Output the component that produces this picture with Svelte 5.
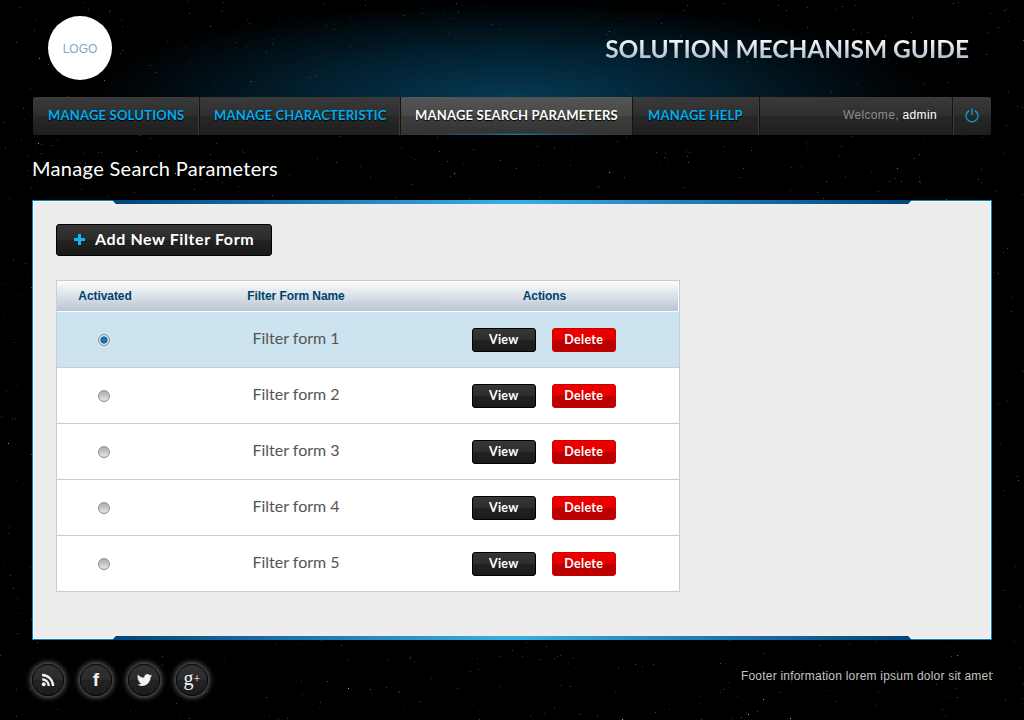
<script lang="ts">
  // seeded so the star field stays the same between runs
  let seed = 4711;
  function rnd() {
    seed = (seed * 16807) % 2147483647;
    return seed / 2147483647;
  }
  const stars = Array.from({ length: 1700 }, () => {
    const bright = rnd() > 0.94;
    return {
      x: Math.floor(rnd() * 1024),
      y: Math.floor(rnd() * 720),
      o: bright ? 0.4 + rnd() * 0.35 : 0.08 + rnd() * 0.25,
    };
  });

  const navItems = [
    { label: "MANAGE SOLUTIONS", width: 167 },
    { label: "MANAGE CHARACTERISTIC", width: 201 },
    { label: "MANAGE SEARCH PARAMETERS", width: 232, active: true },
    { label: "MANAGE HELP", width: 127 },
  ];

  const forms = [
    "Filter form 1",
    "Filter form 2",
    "Filter form 3",
    "Filter form 4",
    "Filter form 5",
  ];
  let activated = "Filter form 1";
</script>

<svg class="stars" width="1024" height="720" aria-hidden="true">
  {#each stars as star}
    <rect x={star.x} y={star.y} width="1" height="1" fill="#fff" opacity={star.o} />
  {/each}
</svg>

<div class="page">
  <header>
    <div class="logo">LOGO</div>
    <div class="title">SOLUTION MECHANISM GUIDE</div>
  </header>

  <nav>
    {#each navItems as item}
      <a href="#top" class="item" class:active={item.active} style="width: {item.width}px">{item.label}</a>
    {/each}
    <div class="welcome">Welcome, <b>admin</b></div>
    <button class="power" aria-label="Log out">
      <svg width="14" height="15" viewBox="0 0 14 15" fill="none" stroke="#0ea5e0" stroke-width="1.2">
        <path d="M4.2 2.6a6 6 0 1 0 5.6 0" />
        <path d="M7 0.5v6.6" />
      </svg>
    </button>
  </nav>

  <h1>Manage Search Parameters</h1>

  <main class="panel">
    <div class="strip top"></div>
    <button class="add"><span class="plus"></span>Add New Filter Form</button>

    <div class="table-wrap">
      <table>
        <thead>
          <tr>
            <th class="c1">Activated</th>
            <th class="c2">Filter Form Name</th>
            <th class="c3">Actions</th>
          </tr>
        </thead>
        <tbody>
          {#each forms as form}
            <tr class:selected={activated === form}>
              <td class="c1">
                <input type="radio" name="active-form" value={form} bind:group={activated} />
              </td>
              <td class="c2 name">{form}</td>
              <td class="c3">
                <div class="actions">
                  <button class="small dark">View</button>
                  <button class="small red">Delete</button>
                </div>
              </td>
            </tr>
          {/each}
        </tbody>
      </table>
    </div>
    <div class="strip bottom"></div>
  </main>

  <footer>
    <div class="social">
      <a href="#top" aria-label="RSS">
        <svg width="16" height="16" viewBox="0 0 18 18" fill="none" stroke="#f2f2f2" stroke-width="2.6">
          <circle cx="4.2" cy="13.8" r="2.2" fill="#f2f2f2" stroke="none" />
          <path d="M2.4 8.2a7.4 7.4 0 0 1 7.4 7.6" />
          <path d="M2.4 3.4a12.3 12.3 0 0 1 12.3 12.4" />
        </svg>
      </a>
      <a href="#top" class="letter f">f</a>
      <a href="#top" aria-label="Twitter">
        <svg width="15" height="12" viewBox="0 0 24 20" preserveAspectRatio="none" fill="#f2f2f2">
          <path d="M24 2.6a10 10 0 0 1-2.8.8 5 5 0 0 0 2.1-2.7c-1 .6-2 1-3.1 1.2a4.9 4.9 0 0 0-8.4 4.5C7.7 6.2 4 4.2 1.6 1.2a4.8 4.8 0 0 0 1.5 6.6 4.9 4.9 0 0 1-2.2-.6v.1a4.9 4.9 0 0 0 3.9 4.8 5 5 0 0 1-2.2.1 4.9 4.9 0 0 0 4.6 3.4A9.9 9.9 0 0 1 0 17.7 14 14 0 0 0 7.6 20c9 0 14-7.5 14-14v-.6A10 10 0 0 0 24 2.6z" />
        </svg>
      </a>
      <a href="#top" class="letter g">g<sup>+</sup></a>
    </div>
    <p>Footer information lorem ipsum dolor sit amet</p>
  </footer>
</div>

<style>
  :global(body) {
    background: #000;
    overflow: hidden;
  }
  .stars {
    position: absolute;
    top: 0;
    left: 0;
  }
  .page {
    position: relative;
    box-sizing: border-box;
    width: 1024px;
    height: 720px;
    padding: 0 32px;
    background: radial-gradient(ellipse 420px 95px at 512px 97px, rgba(5, 60, 88, 0.95), rgba(3, 44, 66, 0.72) 48%, rgba(0, 0, 0, 0) 100%) 0 0 / 1024px 97px no-repeat;
    font-family: "Lato", "Liberation Sans", sans-serif;
  }

  header {
    height: 97px;
    display: flex;
    justify-content: space-between;
    align-items: flex-start;
  }
  .logo {
    width: 64px;
    height: 64px;
    margin: 16px 0 0 16px;
    border-radius: 50%;
    background: #fff;
    color: #7fa8c0;
    font: 12px/66px "Liberation Sans", sans-serif;
    text-align: center;
  }
  .title {
    margin: 34px 23px 0 0;
    font-size: 24.5px;
    line-height: 30px;
    font-weight: 700;
    background: linear-gradient(#f4f7fa 20%, #aebccd 85%);
    -webkit-background-clip: text;
    background-clip: text;
    color: transparent;
  }

  nav {
    display: flex;
    height: 38px;
    margin: 0 1px;
    border-radius: 2px;
    background: linear-gradient(#3a3a3a, #2e2e2e 50%, #272727 50%, #1f1f1f);
    overflow: hidden;
  }
  .item {
    box-sizing: border-box;
    padding-left: 14px;
    line-height: 37px;
    font-size: 13px;
    font-weight: 700;
    letter-spacing: 0.2px;
    white-space: nowrap;
    color: #00aeef;
    text-decoration: none;
    text-shadow: 0 1px 1px #000;
    border-right: 1px solid #131313;
    box-shadow: inset -1px 0 0 #3c3c3c;
  }
  .item:nth-child(3n + 1) {
    padding-left: 15px;
  }
  .item.active {
    position: relative;
    color: #fff;
    background: linear-gradient(#555, #484848 50%, #3e3e3e 50%, #333);
    box-shadow: none;
  }
  .item.active::after {
    content: "";
    position: absolute;
    left: 0;
    right: 0;
    bottom: 0;
    height: 2px;
    background: radial-gradient(ellipse 50% 100% at 50% 100%, #22b5f5, rgba(14, 110, 170, 0.7) 35%, rgba(14, 110, 170, 0) 100%);
  }
  .welcome {
    flex: 1;
    padding-right: 15px;
    text-align: right;
    font: 12px/37px "Liberation Sans", sans-serif;
    letter-spacing: 0.35px;
    color: #8c8c8c;
  }
  .welcome b {
    font-weight: 400;
    color: #fff;
  }
  .power {
    width: 39px;
    padding: 0 1px 1px 0;
    border: 0;
    border-left: 1px solid #131313;
    box-shadow: inset 1px 0 0 #3c3c3c;
    background: none;
    display: flex;
    align-items: center;
    justify-content: center;
  }

  h1 {
    margin: 0;
    height: 65px;
    font-size: 20px;
    line-height: 67px;
    font-weight: 400;
    color: #fff;
    letter-spacing: 0.32px;
  }

  .panel {
    position: relative;
    box-sizing: border-box;
    height: 440px;
    padding: 23px 22px 0;
    border: 1px solid #0b7fba;
    box-shadow: inset 0 0 0 1px #fff;
    background: #ededed;
  }
  .strip {
    position: absolute;
    left: 79px;
    right: 79px;
    height: 4px;
    background: linear-gradient(90deg, #00457a, #38aee6 50%, #00457a);
  }
  .strip.top {
    top: -1px;
    clip-path: polygon(0 0, 100% 0, calc(100% - 4px) 100%, 4px 100%);
  }
  .strip.bottom {
    bottom: -1px;
    clip-path: polygon(4px 0, calc(100% - 4px) 0, 100% 100%, 0 100%);
  }

  .add {
    display: flex;
    align-items: center;
    width: 216px;
    height: 32px;
    margin: 0 0 24px 1px;
    padding: 0 0 4px 17px;
    border: 1px solid #000;
    border-radius: 3px;
    background: linear-gradient(#363636, #2b2b2b 50%, #222 50%, #1a1a1a);
    color: #fff;
    font-family: inherit;
    font-size: 16px;
    font-weight: 700;
    letter-spacing: 0.6px;
  }
  .plus {
    position: relative;
    width: 11px;
    height: 11px;
    margin: 2px 10px 0 0;
    background:
      linear-gradient(#12b5f5, #12b5f5) center / 11px 3px no-repeat,
      linear-gradient(#12b5f5, #12b5f5) center / 3px 11px no-repeat;
  }

  .table-wrap {
    width: 624px;
    margin-left: 1px;
    box-sizing: border-box;
    border: 1px solid #ccc;
    background: #fff;
  }
  table {
    width: 100%;
    border-collapse: collapse;
    table-layout: fixed;
  }
  th {
    height: 30px;
    padding: 0;
    box-sizing: border-box;
    border-bottom: 1px solid #fff;
    background: linear-gradient(#fcfdfe, #b9c5d2);
    color: #00416a;
    font: bold 12px "Liberation Sans", sans-serif;
    letter-spacing: -0.08px;
  }
  th.c3 {
    padding-right: 28px;
    border-right: 1px solid #fff;
  }
  td {
    height: 56px;
    padding: 0;
    box-sizing: border-box;
    border-bottom: 1px solid #ccc;
    text-align: center;
  }
  td.c3 {
    padding-right: 30px;
  }
  tr:last-child td {
    border-bottom: 0;
  }
  tr.selected td {
    background: #cce3f0;
  }
  .c1 {
    width: 96px;
  }
  .c2 {
    width: 286px;
  }
  .name {
    font-size: 16px;
    color: #555;
    padding-bottom: 3px;
  }
  input[type="radio"] {
    appearance: none;
    display: block;
    width: 12px;
    height: 12px;
    margin: 1px 0 0 41px;
    border: 1px solid #8f8f8f;
    border-radius: 50%;
    background: linear-gradient(#aaa, #e6e6e6);
  }
  input[type="radio"]:checked {
    background: radial-gradient(circle, #1c8ccb 0, #0a5f94 3.2px, #d5dfe5 3.9px);
  }
  .actions {
    display: flex;
    justify-content: center;
    gap: 16px;
    padding-top: 1px;
  }
  .small {
    width: 64px;
    height: 24px;
    padding: 0 0 1px;
    border-radius: 3px;
    color: #fff;
    font-family: inherit;
    font-size: 12.5px;
    font-weight: 700;
    letter-spacing: 0.3px;
  }
  .dark {
    border: 1px solid #000;
    background: linear-gradient(#383838, #2c2c2c 50%, #222 50%, #1b1b1b);
  }
  .red {
    border: 1px solid #c80000;
    background: linear-gradient(#ec0000, #e40000 50%, #c00000 50%, #b80000);
  }

  footer {
    display: flex;
    justify-content: space-between;
    margin-top: 24px;
  }
  .social {
    display: flex;
    gap: 16px;
  }
  .social a {
    box-sizing: border-box;
    width: 32px;
    height: 32px;
    border-radius: 50%;
    border: 1px solid #0c0c0c;
    background: linear-gradient(#333, #2a2a2a 50%, #232323 50%, #1c1c1c);
    box-shadow: 0 0 5px 2px rgba(255, 255, 255, 0.34);
    display: flex;
    align-items: center;
    justify-content: center;
    color: #f2f2f2;
    text-decoration: none;
  }
  .letter.f {
    font: bold 19px "Liberation Sans", sans-serif;
  }
  .letter.g {
    font: 20px "Liberation Serif", serif;
    padding-bottom: 3px;
  }
  .letter sup {
    font-size: 12px;
    line-height: 0;
    color: #fff;
  }
  footer p {
    margin: 4px 0 0;
    font: 12px/16px "Liberation Sans", sans-serif;
    letter-spacing: 0.215px;
    color: #c4c4c4;
  }
</style>
